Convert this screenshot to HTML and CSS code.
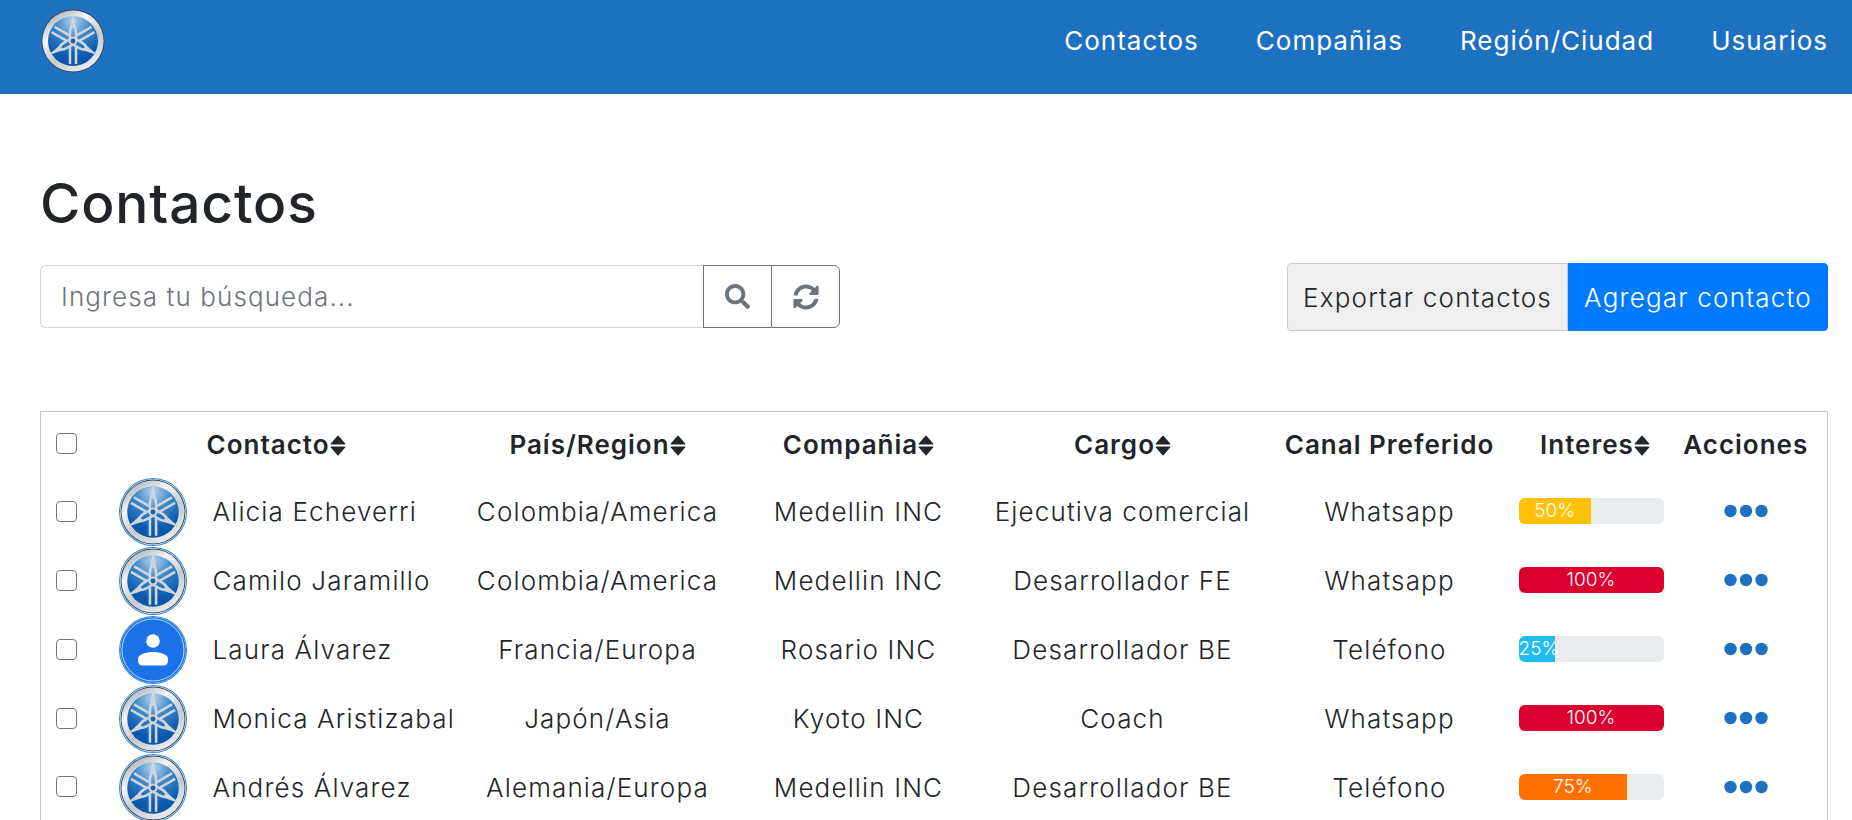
FILE: index.html
```html
<!DOCTYPE html>
<html lang="es">
<head>
<meta charset="utf-8">
<title>Contactos</title>
<link rel="stylesheet" href="styles.css">
</head>
<body>
<svg class="defs" width="0" height="0" aria-hidden="true">
  <defs>
    <linearGradient id="ring" x1="0.2" y1="0" x2="0.8" y2="1">
      <stop offset="0" stop-color="#a3adb6"/>
      <stop offset="0.3" stop-color="#f4f6f8"/>
      <stop offset="0.6" stop-color="#c3cad0"/>
      <stop offset="1" stop-color="#f0f2f4"/>
    </linearGradient>
    <radialGradient id="disc" cx="0.5" cy="0.1" r="0.95">
      <stop offset="0" stop-color="#b4d3ee"/>
      <stop offset="0.38" stop-color="#3a86ca"/>
      <stop offset="0.75" stop-color="#0b5cb0"/>
      <stop offset="1" stop-color="#0a52a2"/>
    </radialGradient>
    <g id="fork">
      <path d="M32 2.500 L35 19 H29 Z" fill="#cfd5da"/>
      <path d="M32 15 C30 17.500 29 20 29 24 V31 M32 15 C34 17.500 35 20 35 24 V31 M29 38 V55 M35 38 V55" fill="none" stroke="#cfd5da" stroke-width="2.500"/>
    </g>
    <symbol id="emblem" viewBox="0 0 64 64">
      <circle cx="32" cy="32" r="31.500" fill="#33424f"/>
      <circle cx="32" cy="32" r="30.600" fill="url(#ring)"/>
      <circle cx="32" cy="32" r="25" fill="url(#disc)"/>
      <use href="#fork"/>
      <use href="#fork" transform="rotate(120 32 32)"/>
      <use href="#fork" transform="rotate(240 32 32)"/>
      <circle cx="32" cy="32" r="3.400" fill="#1b5fa8" stroke="#cfd5da" stroke-width="2"/>
    </symbol>
    <symbol id="sort" viewBox="0 0 15 20">
      <path fill="currentColor" stroke="currentColor" stroke-width="1" stroke-linejoin="round" d="M7.500 1 L14 8.500 H1 Z M1 11.500 H14 L7.500 19 Z"/>
    </symbol>
    <symbol id="dots" viewBox="0 0 44 14">
      <circle cx="6.500" cy="7" r="6.200" fill="currentColor"/>
      <circle cx="22" cy="7" r="6.200" fill="currentColor"/>
      <circle cx="37.500" cy="7" r="6.200" fill="currentColor"/>
    </symbol>
  </defs>
</svg>

<header class="topbar">
  <a class="brand" href="#"><svg class="brand-logo"><use href="#emblem"/></svg></a>
  <nav class="nav">
    <a href="#">Contactos</a>
    <a href="#">Compañias</a>
    <a href="#">Región/Ciudad</a>
    <a href="#">Usuarios</a>
  </nav>
</header>

<main class="page">
  <h1 class="title">Contactos</h1>

  <div class="toolbar">
    <form class="search">
      <input class="search-input" type="text" placeholder="Ingresa tu búsqueda...">
      <button class="icon-btn" type="button" aria-label="Buscar">
        <svg viewBox="0 0 512 512" width="25" height="25"><path fill="currentColor" d="M505 442.700L405.300 343c-4.500-4.500-10.600-7-17-7H372c27.600-35.300 44-79.700 44-128C416 93.100 322.900 0 208 0S0 93.100 0 208s93.100 208 208 208c48.300 0 92.700-16.400 128-44v16.300c0 6.400 2.500 12.500 7 17l99.700 99.700c9.400 9.400 24.600 9.400 33.900 0l28.300-28.300c9.400-9.400 9.400-24.600.1-34zM208 336c-70.700 0-128-57.200-128-128 0-70.700 57.200-128 128-128 70.700 0 128 57.200 128 128 0 70.700-57.200 128-128 128z"/></svg>
      </button>
      <button class="icon-btn icon-btn-last" type="button" aria-label="Recargar">
        <svg viewBox="0 0 512 512" width="26" height="26"><path fill="currentColor" d="M370.720 133.280C339.458 104.008 298.888 87.962 255.848 88c-77.458.068-144.328 53.178-162.791 126.850-1.344 5.363-6.122 9.150-11.651 9.150H24.103c-7.498 0-13.194-6.807-11.807-14.176C33.933 94.924 134.813 8 256 8c66.448 0 126.791 26.136 171.315 68.685L463.030 40.970C478.149 25.851 504 36.559 504 57.941V192c0 13.255-10.745 24-24 24H345.941c-21.382 0-32.090-25.851-16.971-40.971l41.750-41.749zM32 296h134.059c21.382 0 32.090 25.851 16.971 40.971l-41.750 41.750c31.262 29.273 71.835 45.319 114.876 45.280 77.418-.070 144.315-53.144 162.787-126.849 1.344-5.363 6.122-9.150 11.651-9.150h57.304c7.498 0 13.194 6.807 11.807 14.176C478.067 417.076 377.187 504 256 504c-66.448 0-126.791-26.136-171.315-68.685L48.970 471.030C33.851 486.149 8 475.441 8 454.059V320c0-13.255 10.745-24 24-24z"/></svg>
      </button>
    </form>
    <div class="actions">
      <button class="btn btn-light" type="button">Exportar contactos</button>
      <button class="btn btn-blue" type="button">Agregar contacto</button>
    </div>
  </div>

  <div class="table-wrap">
    <table class="contacts">
      <colgroup>
        <col class="c-check"><col class="c-avatar"><col class="c-name"><col class="c-country"><col class="c-company"><col class="c-role"><col class="c-channel"><col class="c-interest"><col class="c-actions">
      </colgroup>
      <thead>
        <tr>
          <th class="cell-check"><input class="check" type="checkbox"></th>
          <th></th>
          <th class="th-name">Contacto<svg class="sort"><use href="#sort"/></svg></th>
          <th>País/Region<svg class="sort"><use href="#sort"/></svg></th>
          <th>Compañia<svg class="sort"><use href="#sort"/></svg></th>
          <th>Cargo<svg class="sort"><use href="#sort"/></svg></th>
          <th>Canal Preferido</th>
          <th>Interes<svg class="sort"><use href="#sort"/></svg></th>
          <th class="th-actions">Acciones</th>
        </tr>
      </thead>
      <tbody>
        <tr>
          <td class="cell-check"><input class="check" type="checkbox"></td>
          <td class="cell-avatar"><svg class="avatar"><use href="#emblem"/></svg></td>
          <td class="cell-name">Alicia Echeverri</td>
          <td>Colombia/America</td><td>Medellin INC</td><td>Ejecutiva comercial</td><td>Whatsapp</td>
          <td class="cell-bar"><div class="progress"><div class="bar bar-yellow" style="width:50%">50%</div></div></td>
          <td class="cell-dots"><svg class="dots"><use href="#dots"/></svg></td>
        </tr>
        <tr>
          <td class="cell-check"><input class="check" type="checkbox"></td>
          <td class="cell-avatar"><svg class="avatar"><use href="#emblem"/></svg></td>
          <td class="cell-name">Camilo Jaramillo</td>
          <td>Colombia/America</td><td>Medellin INC</td><td>Desarrollador FE</td><td>Whatsapp</td>
          <td class="cell-bar"><div class="progress"><div class="bar bar-red" style="width:100%">100%</div></div></td>
          <td class="cell-dots"><svg class="dots"><use href="#dots"/></svg></td>
        </tr>
        <tr>
          <td class="cell-check"><input class="check" type="checkbox"></td>
          <td class="cell-avatar">
            <svg class="avatar" viewBox="0 0 66 66"><circle cx="33" cy="33" r="33" fill="#1a73e8"/><circle cx="33" cy="33" r="31" fill="none" stroke="#cfe2fb" stroke-width="0.900"/><circle cx="33" cy="24" r="6.800" fill="#fff"/><path d="M18 44v-2.500c0-4 8.500-6.500 15-6.500s15 2.500 15 6.500V44a4.500 4.500 0 0 1-4.500 4.500h-21A4.500 4.500 0 0 1 18 44z" fill="#fff"/></svg>
          </td>
          <td class="cell-name">Laura Álvarez</td>
          <td>Francia/Europa</td><td>Rosario INC</td><td>Desarrollador BE</td><td>Teléfono</td>
          <td class="cell-bar"><div class="progress"><div class="bar bar-cyan" style="width:25%">25%</div></div></td>
          <td class="cell-dots"><svg class="dots"><use href="#dots"/></svg></td>
        </tr>
        <tr>
          <td class="cell-check"><input class="check" type="checkbox"></td>
          <td class="cell-avatar"><svg class="avatar"><use href="#emblem"/></svg></td>
          <td class="cell-name">Monica Aristizabal</td>
          <td>Japón/Asia</td><td>Kyoto INC</td><td>Coach</td><td>Whatsapp</td>
          <td class="cell-bar"><div class="progress"><div class="bar bar-red" style="width:100%">100%</div></div></td>
          <td class="cell-dots"><svg class="dots"><use href="#dots"/></svg></td>
        </tr>
        <tr>
          <td class="cell-check"><input class="check" type="checkbox"></td>
          <td class="cell-avatar"><svg class="avatar"><use href="#emblem"/></svg></td>
          <td class="cell-name">Andrés Álvarez</td>
          <td>Alemania/Europa</td><td>Medellin INC</td><td>Desarrollador BE</td><td>Teléfono</td>
          <td class="cell-bar"><div class="progress"><div class="bar bar-orange" style="width:75%">75%</div></div></td>
          <td class="cell-dots"><svg class="dots"><use href="#dots"/></svg></td>
        </tr>
      </tbody>
    </table>
  </div>
</main>
</body>
</html>
```

FILE: styles.css
```css
* { box-sizing: border-box; }
html, body { margin: 0; height: 100%; overflow: hidden; }
body {
  font-family: Inter, "Noto Sans", "Liberation Sans", sans-serif;
  color: #212529;
  background: #fff;
  font-size: 26px;
  font-weight: 300;
  letter-spacing: 1.15px;
}
.defs { position: absolute; }

.topbar {
  height: 94px;
  background: #1e71c1;
  display: flex;
  align-items: center;
  justify-content: space-between;
  padding: 0 24px 12px 41px;
}
.brand { display: block; height: 64px; }
.brand-logo { width: 64px; height: 64px; display: block; }
.nav { display: flex; gap: 57px; margin-bottom: 2px; }
.nav a { color: #fff; text-decoration: none; font-size: 26px; font-weight: 400; letter-spacing: 1px; }

.page { padding: 0 24px 0 40px; }
.title {
  margin: 85px 0 0;
  height: 49px;
  font-size: 55px;
  line-height: 49px;
  font-weight: 500;
  letter-spacing: .9px;
}

.toolbar {
  margin-top: 35px;
  display: flex;
  justify-content: space-between;
  align-items: flex-start;
}
.search { display: flex; width: 800px; height: 63px; margin-top: 2px; }
.search-input {
  flex: 1;
  min-width: 0;
  border: 1px solid #ced4da;
  border-right: 0;
  border-radius: 6px 0 0 6px;
  padding: 0 20px;
  font: 300 26px Inter, "Noto Sans", sans-serif;
  letter-spacing: 1.1px;
  color: #495057;
}
.search-input::placeholder { color: #6c757d; }
.icon-btn {
  width: 68px;
  border: 1px solid #6c757d;
  border-right: 0;
  background: #fff;
  color: #6c757d;
  padding: 0;
  display: flex;
  align-items: center;
  justify-content: center;
}
.icon-btn-last { width: 69px; border-right: 1px solid #6c757d; border-radius: 0 6px 6px 0; }

.actions { display: flex; height: 68px; }
.btn {
  font: 300 26px Inter, "Noto Sans", sans-serif;
  letter-spacing: 1.2px;
  padding: 0;
  white-space: nowrap;
  border: 1px solid #ccc;
}
.btn-light { width: 281px; background: #efefef; color: #212529; border-radius: 4px 0 0 4px; }
.btn-blue { width: 260px; background: #007bff; border-color: #007bff; color: #fff; border-radius: 0 4px 4px 0; }

.table-wrap { margin-top: 80px; }
.contacts {
  width: 100%;
  table-layout: fixed;
  border-collapse: collapse;
  border: 1px solid #c8c8c8;
}
.c-check { width: 60px; }
.c-avatar { width: 106px; }
.c-name { width: 255px; }
.c-country { width: 272px; }
.c-company { width: 250px; }
.c-role { width: 278px; }
.c-channel { width: 256px; }
.c-interest { width: 155px; }
.contacts th {
  height: 66px;
  padding: 0;
  font-size: 26px;
  font-weight: 600;
  letter-spacing: 1px;
  white-space: nowrap;
  text-align: center;
}
.contacts td {
  height: 69px;
  padding: 0 0 1px;
  text-align: center;
  white-space: nowrap;
}
.contacts .th-name { text-align: left; }
.contacts .cell-check { text-align: left; padding-left: 15px; padding-bottom: 2px; }
.contacts .cell-avatar { padding-bottom: 0; }
.contacts .cell-name { text-align: left; padding-left: 6px; }
.contacts .th-actions,
.contacts .cell-dots { padding-right: 8px; }
.check {
  width: 21px;
  height: 21px;
  margin: 0;
  display: block;
  appearance: none;
  background: #fff;
  border: 1px solid #767676;
  border-radius: 4px;
}
.avatar {
  width: 66px;
  height: 66px;
  display: block;
  margin-left: 19px;
  border-radius: 50%;
  box-shadow: 0 0 0 1px #2f83dc;
}
.sort { width: 16px; height: 21px; vertical-align: -2px; color: #212529; }
.progress {
  height: 26px;
  background: #e9ecef;
  border-radius: 6px;
  overflow: hidden;
  margin: 0 9px 1px 0;
  display: flex;
}
.contacts .cell-bar { padding-left: 1px; }
.bar {
  color: #fff;
  font-size: 19px;
  letter-spacing: 0;
  line-height: 26px;
  text-align: center;
  white-space: nowrap;
}
.bar-yellow { background: #ffc107; }
.bar-red { background: #dc0030; }
.bar-cyan { background: #20bdf0; }
.bar-orange { background: #ff7000; }
.dots { width: 44px; height: 14px; display: block; margin: 0 auto 1px; color: #1e71c1; }
```
